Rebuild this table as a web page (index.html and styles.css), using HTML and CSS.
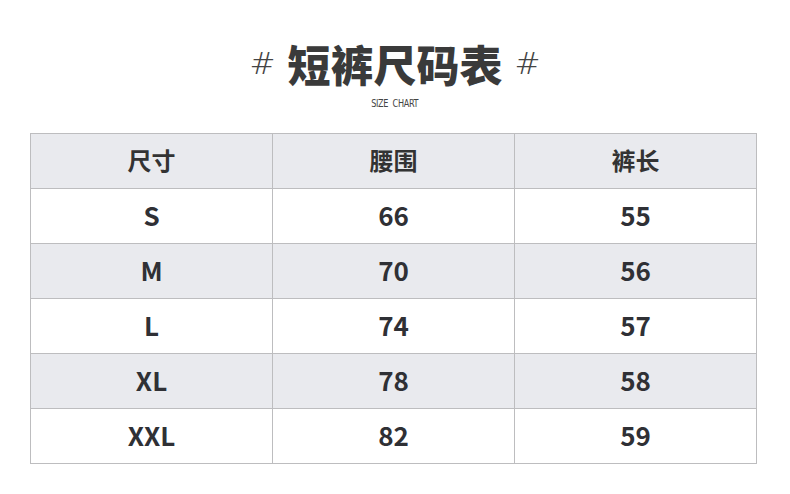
FILE: index.html
```html
<!DOCTYPE html>
<html lang="zh">
<head>
<meta charset="utf-8">
<link rel="stylesheet" href="styles.css">
</head>
<body>
<div class="page">
  <div class="title">
    <span class="hash">#</span><span class="main">短裤尺码表</span><span class="hash">#</span>
  </div>
  <div class="sub">SIZE&nbsp;&nbsp;CHART</div>
  <table class="chart">
    <thead>
      <tr><th>尺寸</th><th>腰围</th><th>裤长</th></tr>
    </thead>
    <tbody>
      <tr><td>S</td><td>66</td><td>55</td></tr>
      <tr class="alt"><td>M</td><td>70</td><td>56</td></tr>
      <tr><td>L</td><td>74</td><td>57</td></tr>
      <tr class="alt"><td>XL</td><td>78</td><td>58</td></tr>
      <tr><td>XXL</td><td>82</td><td>59</td></tr>
    </tbody>
  </table>
</div>
</body>
</html>
```
FILE: styles.css
```css
html, body { margin: 0; padding: 0; background: #fff; }
body { font-family: "Noto Sans CJK SC", "Noto Sans", sans-serif; color: #333; }
.page { width: 790px; height: 494px; display: flex; flex-direction: column; align-items: center; }
.title { margin-top: 36px; height: 54px; display: flex; align-items: center; justify-content: center; gap: 12px; color: #3a3a3a; }
.title .main { font-size: 43px; font-weight: 900; line-height: 54px; }
.title .hash { font-size: 31px; font-weight: 300; line-height: 54px; font-family: "DejaVu Sans", sans-serif; color: #444; }
.sub { font-family: "DejaVu Sans Condensed", "Liberation Sans Narrow", sans-serif; font-size: 11px; color: #444; margin-top: 7px; letter-spacing: -0.4px; transform: scaleX(0.82); }
.chart { margin-top: 23px; border-collapse: collapse; width: 727px; margin-right: 3px; }
.chart th, .chart td { border: 1px solid #bdbdbf; height: 51px; text-align: center; padding: 0 0 3px 0; width: 242px; }
.chart th { background: #e9eaee; font-size: 24px; font-weight: 700; color: #333; }
.chart td { font-size: 26px; font-weight: 700; color: #2f3035; }
.chart tr.alt td { background: #e9eaee; }
```
